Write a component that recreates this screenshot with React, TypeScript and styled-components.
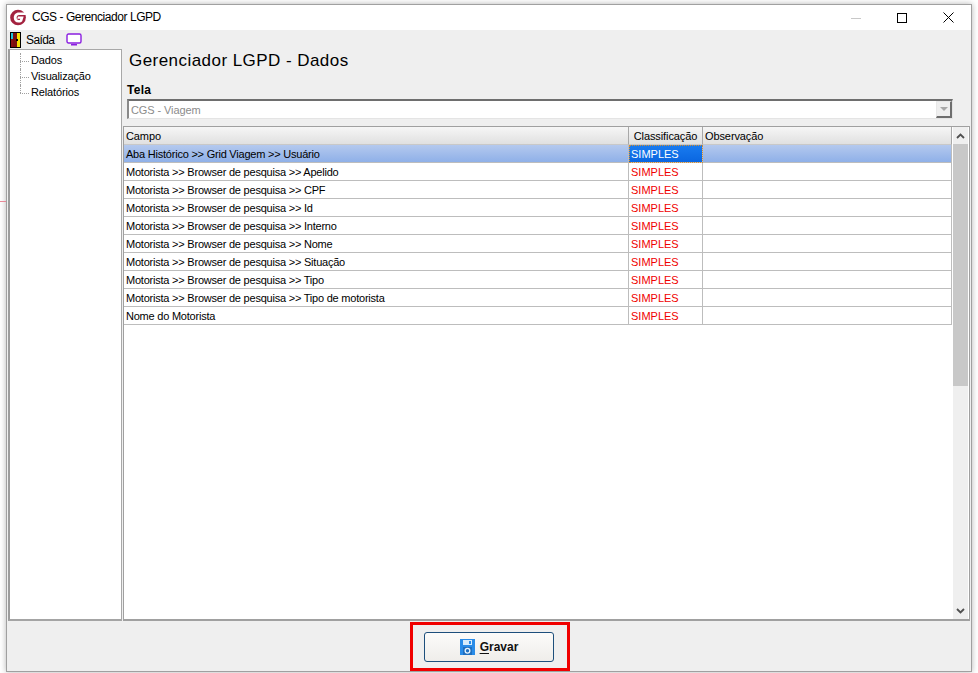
import React from 'react';
import styled, { createGlobalStyle } from 'styled-components';

const GlobalStyle = createGlobalStyle`
    html, body {
        margin: 0;
        padding: 0;
        background: #fff;
        height: 673px;
        overflow: hidden;
    }
    body {
        font-family: "Liberation Sans", Arial, sans-serif;
        font-size: 11px;
        color: #000;
    }
`;

const Page = styled.div`
    width: 978px;
    height: 673px;
    padding: 4px 6px 0 6px;
    box-sizing: border-box;
    position: relative;
`;

const StrayLine = styled.div`
    position: absolute;
    left: 0;
    top: 201px;
    width: 6px;
    height: 1px;
    background: #e88a98;
    z-index: 1;
`;

const Window = styled.div`
    width: 966px;
    height: 668px;
    box-sizing: border-box;
    border: 1px solid #a0a0a0;
    background: #efefef;
    box-shadow: 0 0 6px rgba(0, 0, 0, 0.3);
    display: flex;
    flex-direction: column;
`;

const TitleBar = styled.div`
    height: 25px;
    background: #fff;
    display: flex;
    align-items: center;
    padding-left: 3px;
    flex: none;
`;

const TitleText = styled.span`
    font-size: 12px;
    letter-spacing: -0.45px;
    margin: -1px 0 0 5px;
    flex: 1;
`;

const WindowControl = styled.div`
    width: 46px;
    height: 25px;
    display: flex;
    align-items: center;
    justify-content: center;
`;

const MenuBar = styled.div`
    height: 19px;
    display: flex;
    align-items: center;
    padding-left: 3px;
    flex: none;
`;

const MenuLabel = styled.span`
    font-size: 12px;
    letter-spacing: -0.6px;
    margin: 0 12px 0 5px;
`;

const Body = styled.div`
    flex: none;
    height: 572px;
    display: flex;
    padding-left: 1px;
`;

const TreePanel = styled.div`
    width: 114px;
    flex: none;
    box-sizing: border-box;
    background: #fff;
    border: 1px solid #a8a8a8;
    border-left: 2px solid #9c9c9c;
    border-bottom: 2px solid #a4a4a4;
    padding-top: 3px;
`;

const TreeItem = styled.div<{ $last?: boolean }>`
    height: 16px;
    line-height: 15px;
    padding-left: 21px;
    letter-spacing: -0.15px;
    position: relative;
    &::before {
        content: '';
        position: absolute;
        left: 10px;
        top: 8px;
        width: 9px;
        border-top: 1px dotted #a0a0a0;
    }
    &::after {
        content: '';
        position: absolute;
        left: 10px;
        top: 0;
        height: ${props => (props.$last ? '8px' : '16px')};
        border-left: 1px dotted #a0a0a0;
    }
`;

const Content = styled.div`
    flex: 1;
    min-width: 0;
    margin-left: 1px;
    display: flex;
    flex-direction: column;
`;

const Heading = styled.h1`
    margin: 0;
    flex: none;
    height: 32px;
    padding: 1px 0 0 6px;
    box-sizing: border-box;
    line-height: 21px;
    font-size: 17px;
    font-weight: normal;
    letter-spacing: 0.45px;
`;

const FieldLabel = styled.div`
    flex: none;
    height: 18px;
    line-height: 18px;
    padding-left: 4px;
    font-size: 12px;
    font-weight: bold;
    letter-spacing: 0.3px;
`;

const ComboBox = styled.div`
    flex: none;
    margin: 0 18px 0 4px;
    height: 20px;
    box-sizing: border-box;
    background: #fff;
    border-top: 2px solid #6e6e6e;
    border-left: 2px solid #8a8a8a;
    border-right: 1px solid #e4e4e4;
    border-bottom: 1px solid #e4e4e4;
    display: flex;
    align-items: center;
    justify-content: space-between;
    padding-left: 2px;
    color: #8c8c8c;
    letter-spacing: -0.1px;
`;

const ComboArrow = styled.div`
    width: 16px;
    height: 17px;
    box-sizing: border-box;
    background: #efefef;
    border-right: 2px solid #6e6e6e;
    border-bottom: 2px solid #6e6e6e;
    border-left: 1px solid #e8e8e8;
    border-top: 1px solid #e8e8e8;
    display: flex;
    align-items: center;
    justify-content: center;
    &::after {
        content: '';
        border-left: 4px solid transparent;
        border-right: 4px solid transparent;
        border-top: 4px solid #a8a8a8;
    }
`;

const GridFrame = styled.div`
    flex: none;
    margin-top: 7px;
    margin-right: 1px;
    height: 495px;
    box-sizing: border-box;
    background: #fff;
    border: 1px solid #a0a0a0;
    border-bottom-width: 2px;
    display: flex;
`;

const GridArea = styled.div`
    width: 828px;
    flex: none;
`;

const GridRow = styled.div`
    display: grid;
    grid-template-columns: 505px 74px 1fr;
    height: 18px;
`;

const HeaderCell = styled.div<{ $centered?: boolean }>`
    box-sizing: border-box;
    height: 18px;
    line-height: 19px;
    padding-left: ${props => (props.$centered ? '0' : '2px')};
    text-align: ${props => (props.$centered ? 'center' : 'left')};
    letter-spacing: -0.1px;
    background: linear-gradient(#f6f6f6, #e0e0e0);
    border-right: 1px solid #a8a8a8;
    border-bottom: 1px solid #c8c8c8;
`;

const Cell = styled.div<{ $selected?: boolean; $focus?: boolean; $red?: boolean; $tight?: boolean }>`
    box-sizing: border-box;
    height: 18px;
    line-height: 19px;
    padding-left: 2px;
    white-space: nowrap;
    overflow: hidden;
    letter-spacing: ${props => (props.$tight ? '-0.22px' : '0')};
    border-right: 1px solid #bdbdbd;
    border-bottom: 1px solid #bdbdbd;
    background: ${props => (props.$selected ? 'linear-gradient(#b4c9ee, #8fb0e8)' : '#fff')};
    color: ${props => (props.$red ? '#f00000' : '#000')};
    ${props => props.$focus && `
        background: linear-gradient(#1a7cf0, #0a66e0);
        color: #fff;
        outline: 1px dotted #d89030;
        outline-offset: -1px;
    `}
`;

const ScrollBar = styled.div`
    flex: 1;
    margin: 0 1px;
    background: #efefef;
    display: flex;
    flex-direction: column;
`;

const ScrollButton = styled.div`
    height: 17px;
    flex: none;
    display: flex;
    align-items: center;
    justify-content: center;
`;

const ScrollThumb = styled.div`
    height: 242px;
    flex: none;
    background: #c8c8c8;
`;

const ScrollTrack = styled.div`
    flex: 1;
`;

const Footer = styled.div`
    flex: none;
    height: 50px;
    box-sizing: border-box;
    display: flex;
    justify-content: center;
    align-items: flex-start;
    padding: 1px 0 0 2px;
`;

const Highlight = styled.div`
    box-sizing: border-box;
    width: 160px;
    height: 49px;
    border: 3px solid #f00000;
    padding-right: 2px;
    display: flex;
    align-items: center;
    justify-content: center;
`;

const SaveButton = styled.button`
    width: 130px;
    height: 30px;
    padding: 0;
    border: 1px solid #1d4f7c;
    border-radius: 3px;
    background: linear-gradient(#fcfbfa, #efedea);
    display: flex;
    align-items: center;
    justify-content: center;
    gap: 5px;
    font-family: "Liberation Sans", Arial, sans-serif;
    font-size: 12px;
    font-weight: bold;
    letter-spacing: 0;
    color: #111;
    u { text-underline-offset: 2px; }
`;

const ROWS = [
    'Aba Histórico >> Grid Viagem >> Usuário',
    'Motorista >> Browser de pesquisa >> Apelido',
    'Motorista >> Browser de pesquisa >> CPF',
    'Motorista >> Browser de pesquisa >> Id',
    'Motorista >> Browser de pesquisa >> Interno',
    'Motorista >> Browser de pesquisa >> Nome',
    'Motorista >> Browser de pesquisa >> Situação',
    'Motorista >> Browser de pesquisa >> Tipo',
    'Motorista >> Browser de pesquisa >> Tipo de motorista',
    'Nome do Motorista',
];

const Logo = () => (
    <svg width="17" height="17" viewBox="0 0 18 18">
        <circle cx="8.5" cy="9" r="8.3" fill="#a3223f" />
        <path d="M18 3.6H9.4C6 3.6 4 6 4 9.2s2 5.2 5 5.2c2.2 0 3.2-.6 3.9-1.5L14.5 8H8.4l-.7 2.4h3.1l-.4 1.2H9.2C7.8 11.6 7 10.5 7 9.1s1-2.8 2.7-2.8H17z" fill="#fff" />
    </svg>
);

const DoorIcon = () => (
    <svg width="11" height="16" viewBox="0 0 11 16" shapeRendering="crispEdges">
        <rect width="11" height="16" fill="#000" />
        <rect x="1" y="1" width="2" height="6" fill="#1fc4d8" />
        <rect x="1" y="7" width="2" height="8" fill="#8a1010" />
        <rect x="3" y="1" width="4" height="14" fill="#7a1010" />
        <rect x="7" y="1" width="3" height="14" fill="#f4e000" />
        <rect x="6" y="7" width="2" height="2" fill="#000" />
    </svg>
);

const TvIcon = () => (
    <svg width="16" height="13" viewBox="0 0 16 13">
        <rect x="1" y="1" width="14" height="9" rx="1.5" fill="#fff" stroke="#8a1fe0" strokeWidth="1.4" />
        <rect x="5" y="11" width="6" height="1.5" fill="#8a1fe0" />
    </svg>
);

const FloppyIcon = () => (
    <svg width="15" height="16" viewBox="0 0 16 17" shapeRendering="crispEdges">
        <rect width="16" height="17" rx="1" fill="#2a8ce8" />
        <rect x="3" y="1" width="10" height="5" fill="#d8ecfb" />
        <rect x="10" y="2" width="2" height="3" fill="#2a8ce8" />
        <rect x="3" y="8" width="10" height="9" fill="#1f6fc0" />
        <circle cx="8" cy="12.5" r="2.5" fill="none" stroke="#e8f4fc" strokeWidth="1.4" shapeRendering="auto" />
    </svg>
);

const Chevron = ({ down }: { down?: boolean }) => (
    <svg width="9" height="6" viewBox="0 0 9 6">
        <path d={down ? 'M1 1l3.5 3.5L8 1' : 'M1 5l3.5-3.5L8 5'} fill="none" stroke="#505050" strokeWidth="1.8" />
    </svg>
);

const App = () => (
    <Page>
        <GlobalStyle />
        <StrayLine />
        <Window>
            <TitleBar>
                <Logo />
                <TitleText>CGS - Gerenciador LGPD</TitleText>
                <WindowControl>
                    <svg width="10" height="10" viewBox="0 0 10 10"><path d="M0 5.5h10" stroke="#c8c8c8" /></svg>
                </WindowControl>
                <WindowControl>
                    <svg width="10" height="10" viewBox="0 0 10 10"><rect x=".5" y=".5" width="9" height="9" fill="none" stroke="#000" /></svg>
                </WindowControl>
                <WindowControl>
                    <svg width="11" height="11" viewBox="0 0 11 11"><path d="M.5.5l10 10M10.5.5l-10 10" stroke="#000" /></svg>
                </WindowControl>
            </TitleBar>
            <MenuBar>
                <DoorIcon />
                <MenuLabel>Saída</MenuLabel>
                <TvIcon />
            </MenuBar>
            <Body>
                <TreePanel>
                    <TreeItem>Dados</TreeItem>
                    <TreeItem>Visualização</TreeItem>
                    <TreeItem $last>Relatórios</TreeItem>
                </TreePanel>
                <Content>
                    <Heading>Gerenciador LGPD - Dados</Heading>
                    <FieldLabel>Tela</FieldLabel>
                    <ComboBox>
                        CGS - Viagem
                        <ComboArrow />
                    </ComboBox>
                    <GridFrame>
                        <GridArea>
                            <GridRow>
                                <HeaderCell>Campo</HeaderCell>
                                <HeaderCell $centered>Classificação</HeaderCell>
                                <HeaderCell>Observação</HeaderCell>
                            </GridRow>
                            {ROWS.map((row, index) => (
                                <GridRow key={row}>
                                    <Cell $tight $selected={index === 0}>{row}</Cell>
                                    <Cell $focus={index === 0} $red={index !== 0}>SIMPLES</Cell>
                                    <Cell $selected={index === 0} />
                                </GridRow>
                            ))}
                        </GridArea>
                        <ScrollBar>
                            <ScrollButton><Chevron /></ScrollButton>
                            <ScrollThumb />
                            <ScrollTrack />
                            <ScrollButton><Chevron down /></ScrollButton>
                        </ScrollBar>
                    </GridFrame>
                </Content>
            </Body>
            <Footer>
                <Highlight>
                    <SaveButton>
                        <FloppyIcon />
                        <span><u>G</u>ravar</span>
                    </SaveButton>
                </Highlight>
            </Footer>
        </Window>
    </Page>
);

export default App;
